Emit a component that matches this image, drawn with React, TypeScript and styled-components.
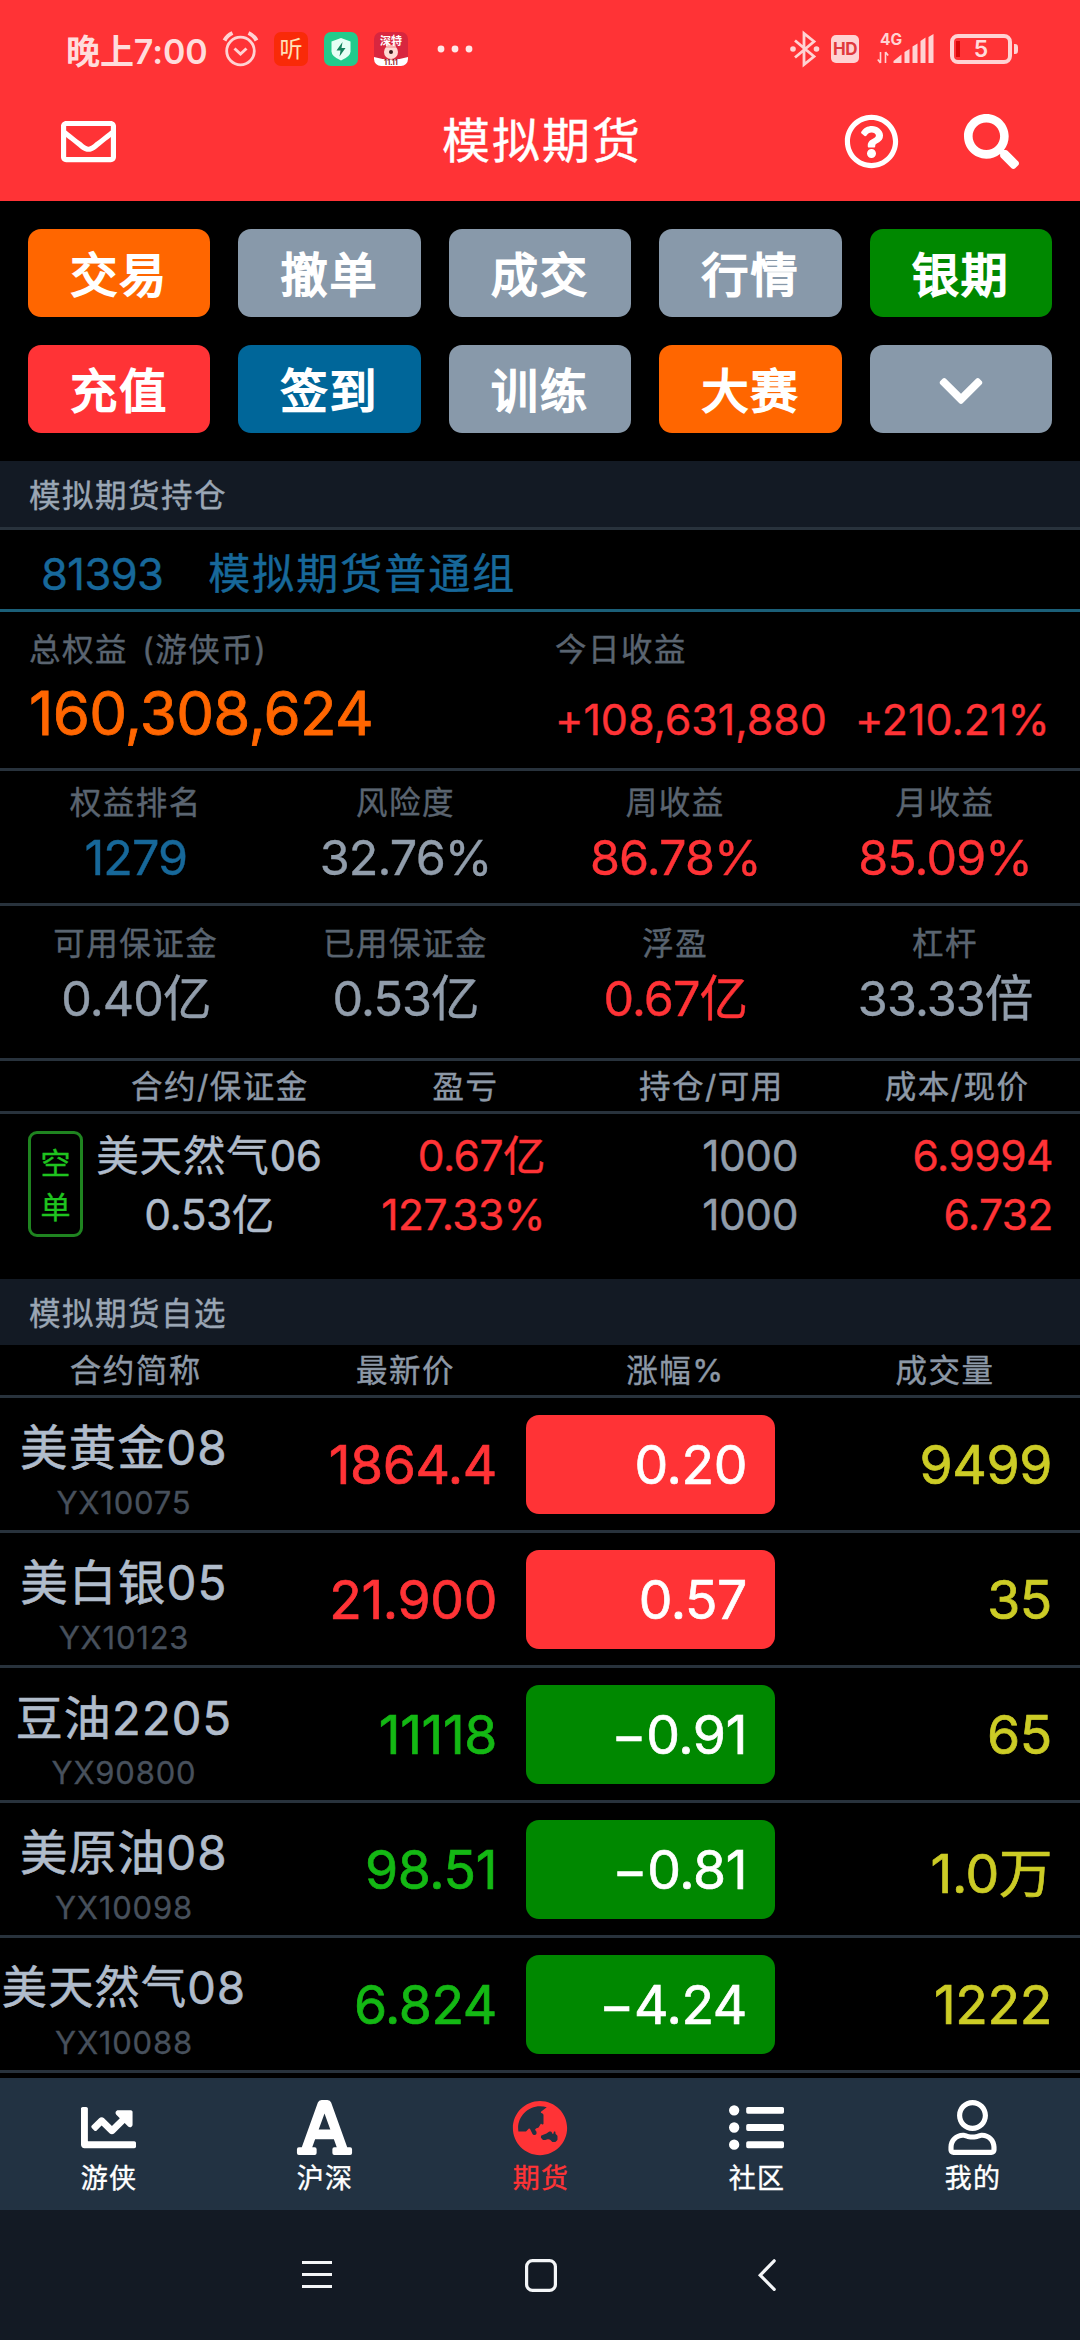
import React from 'react';
import styled, { createGlobalStyle } from 'styled-components';
import {
  FaChartLine,
  FaChevronDown,
  FaFont,
  FaGlobeAsia,
  FaListUl,
  FaRegEnvelope,
  FaRegQuestionCircle,
  FaRegUser,
  FaSearch,
} from 'react-icons/fa';

const color = {
  red: '#ff3336',
  orange: '#ff6600',
  green: '#008800',
  greenText: '#14b814',
  blue: '#006699',
  blueText: '#17689a',
  slate: '#8899aa',
  value: '#919dab',
  light: '#b0bccb',
  label: '#5a6470',
  code: '#47505c',
  yellow: '#cccc26',
  panel: '#131a24',
  line: '#28323c',
  nav: '#223242',
};

const GlobalStyle = createGlobalStyle`
  html, body { margin: 0; background: #000; }
  * { box-sizing: border-box; }
  svg { display: block; flex: none; overflow: visible; }
`;

const Screen = styled.div`
  width: 1080px;
  height: 2340px;
  overflow: hidden;
  display: flex;
  flex-direction: column;
  background: #000;
  font-family: Inter, 'Noto Sans CJK SC', sans-serif;
  -webkit-text-stroke: 0.4px currentColor;
  white-space: nowrap;
`;

const Header = styled.header`
  height: 201px;
  flex: none;
  background: ${color.red};
  color: #fff;
`;

const StatusBar = styled.div`
  height: 98px;
  padding: 0 62px 0 66px;
  display: flex;
  align-items: center;
  justify-content: space-between;
  color: #ffdcdc;
`;

const StatusGroup = styled.div<{ $gap: number }>`
  display: flex;
  align-items: center;
  gap: ${(p) => p.$gap}px;
`;

const Clock = styled.span`
  width: 141px;
  font-size: 34px;
  font-weight: 600;
  letter-spacing: -0.1px;
  -webkit-text-stroke: 0;
`;

const MoreSlot = styled.span`
  margin-left: 13px;
`;

const SignalGroup = styled.div`
  margin: 0 6px 0 7px;
  display: flex;
  align-items: center;
  gap: 15px;
`;

const AppTile = styled.span<{ $bg: string }>`
  width: 34px;
  height: 34px;
  border-radius: 7px;
  overflow: hidden;
  background: ${(p) => p.$bg};
  -webkit-text-stroke: 0;
`;

const TitleBar = styled.div`
  height: 86px;
  padding: 0 61px;
  display: grid;
  grid-template-columns: 1fr auto 1fr;
  align-items: center;
`;

const Title = styled.h1`
  margin: 0;
  padding-left: 4px;
  font-size: 48px;
  line-height: 86px;
  font-weight: 400;
  letter-spacing: 2px;
`;

const TitleActions = styled.div`
  display: flex;
  justify-content: flex-end;
  align-items: center;
  gap: 65px;
`;

const Actions = styled.div`
  height: 260px;
  flex: none;
  padding: 28px;
  display: grid;
  grid-template-columns: repeat(5, 1fr);
  grid-auto-rows: 88px;
  gap: 28px;
`;

const Action = styled.button<{ $bg: string }>`
  border: 0;
  padding: 3px 0 0;
  border-radius: 13px;
  display: flex;
  align-items: center;
  justify-content: center;
  background: ${(p) => p.$bg};
  color: #fff;
  font: 400 47px/85px Inter, 'Noto Sans CJK SC', sans-serif;
  -webkit-text-stroke: 2px currentColor;
  letter-spacing: 2px;
`;

const SectionTitle = styled.h2<{ $ruled?: boolean }>`
  margin: 0;
  height: ${(p) => (p.$ruled ? 69 : 66)}px;
  flex: none;
  padding-left: 29px;
  border-bottom: ${(p) => (p.$ruled ? `3px solid ${color.line}` : '0')};
  background: ${color.panel};
  color: #9aa6b4;
  font-size: 31.5px;
  font-weight: 400;
  line-height: 69px;
  letter-spacing: 1.5px;
`;

const Account = styled.div`
  height: 82px;
  flex: none;
  padding: 5px 0 0 41px;
  border-bottom: 3px solid #1b5f78;
  display: flex;
  gap: 45px;
  color: ${color.blueText};
  font-size: 42px;
  line-height: 78px;
  letter-spacing: 2px;
`;

const AccountId = styled.span`
  font-size: 43.5px;
  letter-spacing: -0.6px;
`;

const Equity = styled.div`
  height: 159px;
  flex: none;
  padding: 16px 28px 0 29px;
  border-bottom: 3px solid ${color.line};
  display: grid;
  grid-template-columns: 526px 1fr;
`;

const Label = styled.div`
  color: ${color.label};
  font-size: 31.5px;
  line-height: 44px;
  letter-spacing: 1.5px;
  word-spacing: 4px;
`;

const EquityTotal = styled.div`
  color: ${color.orange};
  font-size: 60px;
  line-height: 82px;
  letter-spacing: -0.7px;
  -webkit-text-stroke: 0.8px currentColor;
`;

const EquityGain = styled.div`
  display: flex;
  gap: 28px;
  color: ${color.red};
  font-size: 43px;
  line-height: 94px;
  letter-spacing: -0.05px;
`;

const Stats = styled.div<{ $height: number; $top: number }>`
  height: ${(p) => p.$height}px;
  flex: none;
  padding: ${(p) => p.$top}px 0 0 1px;
  border-bottom: 3px solid ${color.line};
  display: grid;
  grid-template-columns: repeat(4, 1fr);
  text-align: center;
`;

const StatValue = styled.div<{ $color: string }>`
  color: ${(p) => p.$color};
  font-size: 48.5px;
  line-height: 65px;
  letter-spacing: -0.9px;
`;

const HeadRow = styled.div<{ $left?: number }>`
  height: 53px;
  flex: none;
  padding-left: ${(p) => p.$left ?? 1}px;
  border-bottom: 3px solid ${color.line};
  display: grid;
  grid-template-columns: repeat(4, 1fr);
  text-align: center;
  color: #8c98a6;
  font-size: 31.5px;
  line-height: 51px;
  letter-spacing: 1.5px;
`;

const Position = styled.div`
  height: 165px;
  flex: none;
  padding: 12px 27px 0 28px;
  display: grid;
  grid-template-columns: 55px 252px 210px 253px 1fr;
`;

const SideTag = styled.div`
  width: 55px;
  height: 106px;
  margin-top: 5px;
  padding-top: 7px;
  border: 3px solid #1f8420;
  border-radius: 9px;
  display: flex;
  flex-direction: column;
  align-items: center;
  color: #1fc41f;
  font-size: 30px;
  line-height: 44px;
`;

const PositionCell = styled.div<{ $color: string; $center?: boolean }>`
  color: ${(p) => p.$color};
  font-size: 42.5px;
  line-height: 59px;
  letter-spacing: -0.5px;
  text-align: ${(p) => (p.$center ? 'center' : 'right')};
`;

const Cjk = styled.span`
  letter-spacing: 0.8px;
`;

const QuoteRow = styled.div`
  height: 135px;
  flex: none;
  border-bottom: 3px solid ${color.line};
  display: grid;
  grid-template-columns: 248px 249px 29px 249px 1fr;
  align-items: center;
  font-size: 53.5px;
  letter-spacing: -0.4px;
  -webkit-text-stroke: 0.7px currentColor;
`;

const QuoteName = styled.div`
  padding-top: 17px;
  display: flex;
  flex-direction: column;
  align-items: center;
`;

const Name = styled.span<{ $size: number }>`
  color: ${color.light};
  font-size: ${(p) => p.$size}px;
  line-height: 60px;
  letter-spacing: 1.2px;
  -webkit-text-stroke: 0.6px currentColor;
`;

const Code = styled.span`
  color: ${color.code};
  font-size: 31px;
  line-height: 50px;
  letter-spacing: 0.8px;
  -webkit-text-stroke: 0.3px currentColor;
`;

const Price = styled.span<{ $up: boolean }>`
  text-align: right;
  color: ${(p) => (p.$up ? color.red : color.greenText)};
`;

const Change = styled.span<{ $up: boolean }>`
  grid-column: 4;
  height: 99px;
  padding-right: 28px;
  border-radius: 13px;
  background: ${(p) => (p.$up ? color.red : color.green)};
  color: #fff;
  line-height: 99px;
  text-align: right;
`;

const Volume = styled.span`
  padding-right: 28px;
  text-align: right;
  color: ${color.yellow};
`;

const TabBar = styled.nav`
  height: 132px;
  flex: none;
  margin-top: 5px;
  padding-top: 22px;
  background: ${color.nav};
  display: grid;
  grid-template-columns: repeat(5, 1fr);
`;

const Tab = styled.div<{ $active?: boolean }>`
  display: flex;
  flex-direction: column;
  align-items: center;
  gap: 4px;
  color: ${(p) => (p.$active ? color.red : '#fff')};
  font-size: 27px;
  line-height: 40px;
  letter-spacing: 1.2px;
`;

const TabIcon = styled.span`
  height: 55px;
  display: flex;
  align-items: center;
`;

const TabLabel = styled.span`
  padding-left: 2px;
`;

const SystemNav = styled.div`
  flex: 1;
  padding: 0 304px 0 302px;
  background: ${color.panel};
  display: flex;
  align-items: center;
  justify-content: space-between;
`;

const HomeKey = styled.span`
  margin-right: 9px;
`;

const AlarmIcon = () => (
  <svg width="35" height="36" viewBox="0 0 35 36" fill="none" stroke="#ffd3d3" strokeWidth="2.8">
    <circle cx="17.5" cy="20" r="13.8" />
    <path d="M11.5 17.5l6 5.5 6-5.5" strokeWidth="3" />
    <path d="M1.5 9.5Q4 4.500 9.500 2M33.500 9.500Q31 4.500 25.500 2" strokeWidth="4" />
  </svg>
);

const ListenText = styled.span`
  display: block;
  font-size: 23px;
  line-height: 34px;
  text-align: center;
  color: #ffe0b8;
`;

const ListenIcon = () => (
  <AppTile $bg="#f92a08">
    <ListenText>听</ListenText>
  </AppTile>
);

const ShieldIcon = () => (
  <AppTile $bg="#22cb8c">
    <svg width="34" height="34" viewBox="0 0 34 34">
      <path d="M17 6l9.500 3.500v10q0 5-9.500 9-9.500-4-9.500-9v-10z" fill="#e6fff5" />
      <path d="M18.500 10l-6 8.500h4l-1 6 6-8.500h-4z" fill="#15805c" />
    </svg>
  </AppTile>
);

const MascotIcon = () => (
  <AppTile $bg="#d8263f">
    <svg width="34" height="34" viewBox="0 0 34 34">
      <ellipse cx="17" cy="20" rx="7" ry="7" fill="#ffd9d4" />
      <path d="M12 16l1-7 3 4h2l3-4 1 7z" fill="#f5b0ad" />
      <circle cx="17" cy="20" r="2" fill="#3a1a1c" />
      <path d="M0 25q17 5 34 0v9H0z" fill="#fff" />
      <text x="17" y="32.500" fontSize="7" fontWeight="700" textAnchor="middle" fill="#8c1526">11.11</text>
      <text x="17" y="13" fontSize="11" fontWeight="700" textAnchor="middle" fill="#fff">深特</text>
    </svg>
  </AppTile>
);

const MoreIcon = () => (
  <svg width="36" height="8" viewBox="0 0 36 8" fill="#ffe6e6">
    <circle cx="4" cy="4" r="3.400" />
    <circle cx="18" cy="4" r="3.400" />
    <circle cx="32" cy="4" r="3.400" />
  </svg>
);

const BluetoothIcon = () => (
  <svg width="30" height="36" viewBox="0 0 30 36" fill="none" stroke="#ffd3d3" strokeWidth="2.800">
    <path d="M5 9.500L24 25.500 14 33.500V2.500l10 8L5 26.500" />
    <circle cx="3" cy="18" r="2.800" fill="#ffd3d3" stroke="none" />
    <circle cx="26.500" cy="18" r="2.800" fill="#ffd3d3" stroke="none" />
  </svg>
);

const HdBadge = styled.span`
  width: 28px;
  height: 28px;
  border-radius: 5px;
  background: #ffd3d3;
  color: #e0393d;
  font-size: 17px;
  font-weight: 700;
  line-height: 28px;
  letter-spacing: -0.6px;
  text-align: center;
  -webkit-text-stroke: 0;
`;

const SignalIcon = () => (
  <svg width="58" height="36" viewBox="0 -1 58 36" fill="#ffd3d3">
    <text x="3" y="13" fontSize="15.500" fontWeight="700">4G</text>
    <path d="M3.500 20v11M0.800 27.500l2.700 3.500M8.500 31V20M8.500 20l2.700 3.500" stroke="#ffd3d3" strokeWidth="1.600" />
    <path d="M16.500 31v-2l8-6.500V31z" />
    <path d="M27.500 20l5-3v14h-5zM35.500 14.500l5-3V31h-5zM43.500 9l5-3.500V31h-5zM51.500 5l5-3V31h-5z" />
  </svg>
);

const Battery = styled.div`
  width: 62px;
  height: 30px;
  border: 4px solid #ffd3d3;
  border-radius: 8px;
  position: relative;
  font-size: 23px;
  font-weight: 600;
  line-height: 22px;
  text-align: center;
  background: linear-gradient(#d80808, #d80808) 2px 3px / 4px 16px no-repeat;
  -webkit-text-stroke: 0;
  &::after {
    content: '';
    position: absolute;
    right: -10px;
    top: 6px;
    width: 4px;
    height: 10px;
    border-radius: 0 3px 3px 0;
    background: #ffd3d3;
  }
`;

type Stat = { label: string; value: string; tone: string };

const rankStats: Stat[] = [
  { label: '权益排名', value: '1279', tone: color.blueText },
  { label: '风险度', value: '32.76%', tone: color.value },
  { label: '周收益', value: '86.78%', tone: color.red },
  { label: '月收益', value: '85.09%', tone: color.red },
];

const marginStats: Stat[] = [
  { label: '可用保证金', value: '0.40亿', tone: color.value },
  { label: '已用保证金', value: '0.53亿', tone: color.value },
  { label: '浮盈', value: '0.67亿', tone: color.red },
  { label: '杠杆', value: '33.33倍', tone: color.value },
];

const actions = [
  ['交易', color.orange],
  ['撤单', color.slate],
  ['成交', color.slate],
  ['行情', color.slate],
  ['银期', color.green],
  ['充值', color.red],
  ['签到', color.blue],
  ['训练', color.slate],
  ['大赛', color.orange],
];

const quotes = [
  { name: '美黄金08', code: 'YX10075', price: '1864.4', change: '0.20', volume: '9499', size: 47.5 },
  { name: '美白银05', code: 'YX10123', price: '21.900', change: '0.57', volume: '35', size: 47.5 },
  { name: '豆油2205', code: 'YX90800', price: '11118', change: '−0.91', volume: '65', size: 47 },
  { name: '美原油08', code: 'YX10098', price: '98.51', change: '−0.81', volume: '1.0万', size: 47.5 },
  { name: '美天然气08', code: 'YX10088', price: '6.824', change: '−4.24', volume: '1222', size: 45.2 },
];

const tabs = [
  { label: '游侠', Icon: FaChartLine, size: 55 },
  { label: '沪深', Icon: FaFont, size: 63 },
  { label: '期货', Icon: FaGlobeAsia, size: 56, active: true },
  { label: '社区', Icon: FaListUl, size: 55 },
  { label: '我的', Icon: FaRegUser, size: 55 },
];

const StatRow = ({ items, height, top }: { items: Stat[]; height: number; top: number }) => (
  <Stats $height={height} $top={top}>
    {items.map((s) => (
      <div key={s.label}>
        <Label>{s.label}</Label>
        <StatValue $color={s.tone}>{s.value}</StatValue>
      </div>
    ))}
  </Stats>
);

export default function App() {
  return (
    <Screen>
      <GlobalStyle />
      <Header>
        <StatusBar>
          <StatusGroup $gap={16}>
            <Clock>晚上7:00</Clock>
            <AlarmIcon />
            <ListenIcon />
            <ShieldIcon />
            <MascotIcon />
            <MoreSlot>
              <MoreIcon />
            </MoreSlot>
          </StatusGroup>
          <StatusGroup $gap={11}>
            <BluetoothIcon />
            <HdBadge>HD</HdBadge>
            <SignalGroup>
              <SignalIcon />
              <Battery>5</Battery>
            </SignalGroup>
          </StatusGroup>
        </StatusBar>
        <TitleBar>
          <FaRegEnvelope size={55} />
          <Title>模拟期货</Title>
          <TitleActions>
            <FaRegQuestionCircle size={55} />
            <FaSearch size={55} />
          </TitleActions>
        </TitleBar>
      </Header>

      <Actions>
        {actions.map(([text, bg]) => (
          <Action key={text} $bg={bg}>{text}</Action>
        ))}
        <Action $bg={color.slate}>
          <FaChevronDown size={50} />
        </Action>
      </Actions>

      <SectionTitle $ruled>模拟期货持仓</SectionTitle>
      <Account>
        <AccountId>81393</AccountId>
        <span>模拟期货普通组</span>
      </Account>
      <Equity>
        <div>
          <Label>总权益 (游侠币)</Label>
          <EquityTotal>160,308,624</EquityTotal>
        </div>
        <div>
          <Label>今日收益</Label>
          <EquityGain>
            <span>+108,631,880</span>
            <span>+210.21%</span>
          </EquityGain>
        </div>
      </Equity>
      <StatRow items={rankStats} height={135} top={10} />
      <StatRow items={marginStats} height={155} top={16} />

      <HeadRow $left={97}>
        <span>合约/保证金</span>
        <span>盈亏</span>
        <span>持仓/可用</span>
        <span>成本/现价</span>
      </HeadRow>
      <Position>
        <SideTag>
          <span>空</span>
          <span>单</span>
        </SideTag>
        <PositionCell $color={color.light} $center>
          <div><Cjk>美天然气</Cjk>06</div>
          <div>0.53亿</div>
        </PositionCell>
        <PositionCell $color={color.red}>
          <div>0.67亿</div>
          <div>127.33%</div>
        </PositionCell>
        <PositionCell $color={color.value}>
          <div>1000</div>
          <div>1000</div>
        </PositionCell>
        <PositionCell $color={color.red}>
          <div>6.9994</div>
          <div>6.732</div>
        </PositionCell>
      </Position>

      <SectionTitle>模拟期货自选</SectionTitle>
      <HeadRow>
        <span>合约简称</span>
        <span>最新价</span>
        <span>涨幅%</span>
        <span>成交量</span>
      </HeadRow>
      {quotes.map((q) => {
        const up = !q.change.startsWith('−');
        return (
          <QuoteRow key={q.code}>
            <QuoteName>
              <Name $size={q.size}>{q.name}</Name>
              <Code>{q.code}</Code>
            </QuoteName>
            <Price $up={up}>{q.price}</Price>
            <Change $up={up}>{q.change}</Change>
            <Volume>{q.volume}</Volume>
          </QuoteRow>
        );
      })}

      <TabBar>
        {tabs.map(({ label, Icon, size, active }) => (
          <Tab key={label} $active={active}>
            <TabIcon>
              <Icon size={size} />
            </TabIcon>
            <TabLabel>{label}</TabLabel>
          </Tab>
        ))}
      </TabBar>
      <SystemNav>
        <svg width="30" height="32" viewBox="0 0 30 32" stroke="#f4f6f8" strokeWidth="3">
          <path d="M0 3.500h30M0 15.500h30M0 27.500h30" />
        </svg>
        <HomeKey>
          <svg width="32" height="33" viewBox="0 0 32 33" fill="none" stroke="#f4f6f8" strokeWidth="3.200">
            <rect x="1.600" y="1.600" width="28.800" height="29.800" rx="6" />
          </svg>
        </HomeKey>
        <svg width="18" height="33" viewBox="0 0 18 33" fill="none" stroke="#f4f6f8" strokeWidth="3.200" strokeLinecap="round">
          <path d="M16.200 1.800L2.200 16.200l14 14.200" />
        </svg>
      </SystemNav>
    </Screen>
  );
}
